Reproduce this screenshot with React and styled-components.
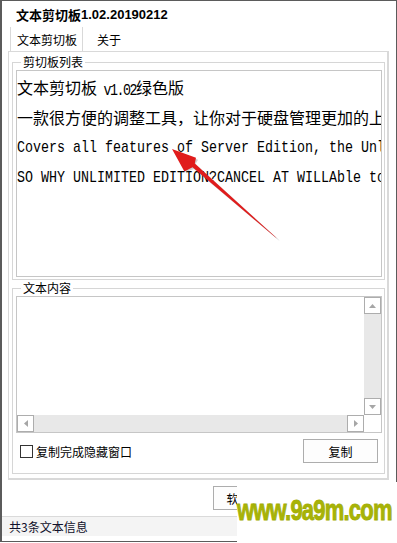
import React from "react";
import styled, { createGlobalStyle } from "styled-components";

const GlobalStyle = createGlobalStyle`
  html, body {
    margin: 0;
    padding: 0;
    background: #fff;
  }
  body {
    font-family: "Noto Sans CJK SC", "Liberation Sans", sans-serif;
    font-size: 12px;
    color: #000;
  }
  * {
    box-sizing: border-box;
  }
`;

const Page = styled.div`
  position: relative;
  width: 397px;
  height: 543px;
  overflow: hidden;
`;

const Window = styled.div`
  width: 397px;
  height: 542px;
  border: 1px solid #5b5b5b;
  border-left-width: 2px;
  background: #fff;
  display: flex;
  flex-direction: column;
`;

const TitleBar = styled.div`
  flex: none;
  height: 26px;
  display: flex;
  align-items: center;
  padding-left: 14px;
  font-size: 13px;
  font-weight: bold;
`;

const Version = styled.span`
  font-family: "Liberation Sans", sans-serif;
`;

const TabStrip = styled.div`
  flex: none;
  height: 24px;
  display: flex;
  padding-left: 8px;
`;

const Tab = styled.div`
  height: 100%;
  display: flex;
  align-items: center;
  padding: ${(p) => (p.$active ? "0 5px 0 6px" : "0 0 0 14px")};
  border-left: ${(p) => (p.$active ? "1px solid #d9d9d9" : "none")};
  border-right: ${(p) => (p.$active ? "1px solid #d9d9d9" : "none")};
`;

const TabPanel = styled.div`
  flex: none;
  margin-left: 6px;
  width: 381px;
  height: 429px;
  border: 1px solid #d9d9d9;
  border-right-width: 2px;
  border-bottom-width: 2px;
  padding: 2px 2px 2px 3px;
`;

const Group = styled.fieldset`
  margin: 0;
  min-width: 0;
  padding: 0 2px ${(p) => p.$pb}px 3px;
  border: 1px solid #d6d6d6;
`;

const Legend = styled.legend`
  margin-left: 5px;
  padding: 0 2px;
  font-size: 12px;
  line-height: 16px;
`;

const ListBox = styled.div`
  height: 207px;
  border: 1px solid #c6c6c6;
  padding-top: 1px;
  overflow: hidden;
`;

const ListItem = styled.div`
  height: 30px;
  line-height: 30px;
  white-space: nowrap;
  overflow: hidden;
  font-size: 16px;
  font-family: "Noto Sans CJK SC", sans-serif;
`;

const Mono = styled.span`
  display: inline-block;
  font-family: "Liberation Mono", monospace;
  font-size: 13.33px;
  letter-spacing: ${(p) => (p.$tight ? "-1.5px" : "0")};
  white-space: pre;
  vertical-align: ${(p) => (p.$raise ? "3px" : "baseline")};
  transform: scaleY(1.2);
`;

const TextBox = styled.div`
  height: 137px;
  border: 1px solid #c6c6c6;
  display: grid;
  grid-template-columns: 1fr 17px;
  grid-template-rows: 1fr 17px;
`;

const TextArea = styled.div`
  background: #fff;
`;

const VScroll = styled.div`
  display: flex;
  flex-direction: column;
  justify-content: space-between;
  background: #e8e8e8;
`;

const HScroll = styled.div`
  display: flex;
  justify-content: space-between;
  background: #e8e8e8;
`;

const Corner = styled.div`
  background: #fff;
`;

const ScrollBtn = styled.div`
  width: 17px;
  height: 17px;
  border: 1px solid #adadad;
  background: #fff;
  display: flex;
  align-items: center;
  justify-content: center;
`;

const OptionRow = styled.div`
  height: 24px;
  margin-top: 6px;
  padding: 0 4px;
  display: flex;
  align-items: center;
  justify-content: space-between;
`;

const CheckLabel = styled.label`
  display: flex;
  align-items: center;
  gap: 3px;
  font-size: 12px;
`;

const CheckBox = styled.span`
  width: 13px;
  height: 13px;
  border: 1px solid #333;
  background: #fff;
`;

const Button = styled.button`
  width: 75px;
  height: 24px;
  padding: 0;
  border: 1px solid #adadad;
  background: #fdfdfd;
  color: #000;
  font-family: "Noto Sans CJK SC", sans-serif;
  font-size: 12px;
`;

const Footer = styled.div`
  flex: none;
  height: 36px;
  padding: 6px 0 0 211px;
`;

const StatusBar = styled.div`
  flex: none;
  height: 20px;
  border-top: 1px solid #dadada;
  background: #f4f4f4;
  padding-left: 7px;
  display: flex;
  align-items: center;
  font-size: 12px;
  color: #10102a;
`;

const ArrowLayer = styled.svg`
  position: absolute;
  left: 0;
  top: 0;
  pointer-events: none;
`;

const Watermark = styled.div`
  position: absolute;
  left: 237px;
  top: 482px;
  width: 160px;
  height: 61px;
  background: #fff;
  display: flex;
  align-items: center;
  padding-bottom: 4px;
`;

const WatermarkText = styled.span`
  font-family: "Liberation Sans", sans-serif;
  font-weight: bold;
  font-size: 22px;
  letter-spacing: -0.8px;
  color: #a8b407;
  -webkit-text-stroke: 0.7px #a3ae05;
  transform: scaleY(1.35);
  transform-origin: left center;
`;

const Tri = ({ dir }) => {
  const pts = {
    up: "0,4 7,4 3.5,0",
    down: "0,0 7,0 3.5,4",
    left: "4,0 4,7 0,3.5",
    right: "0,0 0,7 4,3.5",
  }[dir];
  const vertical = dir === "up" || dir === "down";
  return (
    <svg width={vertical ? 7 : 4} height={vertical ? 4 : 7}>
      <polygon points={pts} fill="#a6a6a6" />
    </svg>
  );
};

const App = () => {
  return (
    <Page>
      <GlobalStyle />
      <Window>
        <TitleBar>
          文本剪切板<Version>1.02.20190212</Version>
        </TitleBar>
        <TabStrip>
          <Tab $active>文本剪切板</Tab>
          <Tab>关于</Tab>
        </TabStrip>
        <TabPanel>
          <Group $pb={2}>
            <Legend>剪切板列表</Legend>
            <ListBox>
              <ListItem>
                文本剪切板<Mono $tight> v1.02</Mono>绿色版
              </ListItem>
              <ListItem>一款很方便的调整工具，让你对于硬盘管理更加的上手</ListItem>
              <ListItem>
                <Mono $raise>Covers all features of Server Edition, the Unlimited</Mono>
              </ListItem>
              <ListItem>
                <Mono $raise>SO WHY UNLIMITED EDITION?CANCEL AT WILLAble to</Mono>
              </ListItem>
            </ListBox>
          </Group>
          <Group $pb={10}>
            <Legend>文本内容</Legend>
            <TextBox>
              <TextArea />
              <VScroll>
                <ScrollBtn>
                  <Tri dir="up" />
                </ScrollBtn>
                <ScrollBtn>
                  <Tri dir="down" />
                </ScrollBtn>
              </VScroll>
              <HScroll>
                <ScrollBtn>
                  <Tri dir="left" />
                </ScrollBtn>
                <ScrollBtn>
                  <Tri dir="right" />
                </ScrollBtn>
              </HScroll>
              <Corner />
            </TextBox>
            <OptionRow>
              <CheckLabel>
                <CheckBox />
                复制完成隐藏窗口
              </CheckLabel>
              <Button>复制</Button>
            </OptionRow>
          </Group>
        </TabPanel>
        <Footer>
          <Button>软件主页</Button>
        </Footer>
        <StatusBar>共3条文本信息</StatusBar>
      </Window>

      {/* red annotation arrow */}
      <ArrowLayer width="397" height="543" viewBox="0 0 397 543">
        <g transform="translate(2 2)" opacity="0.25">
          <polygon points="276,237 277.5,239 192,167 187.5,168.5 184.4,171.4 172,149 196,157.8 193.5,162" fill="#444" />
        </g>
        <polygon
          points="275,236.5 276.8,238.6 192.5,167.2 184.4,171.4 172,149 196,157.8 194.8,163.5"
          fill="#e01c1c"
        />
      </ArrowLayer>

      <Watermark>
        <WatermarkText>www.9a9m.com</WatermarkText>
      </Watermark>
    </Page>
  );
};

export default App;
